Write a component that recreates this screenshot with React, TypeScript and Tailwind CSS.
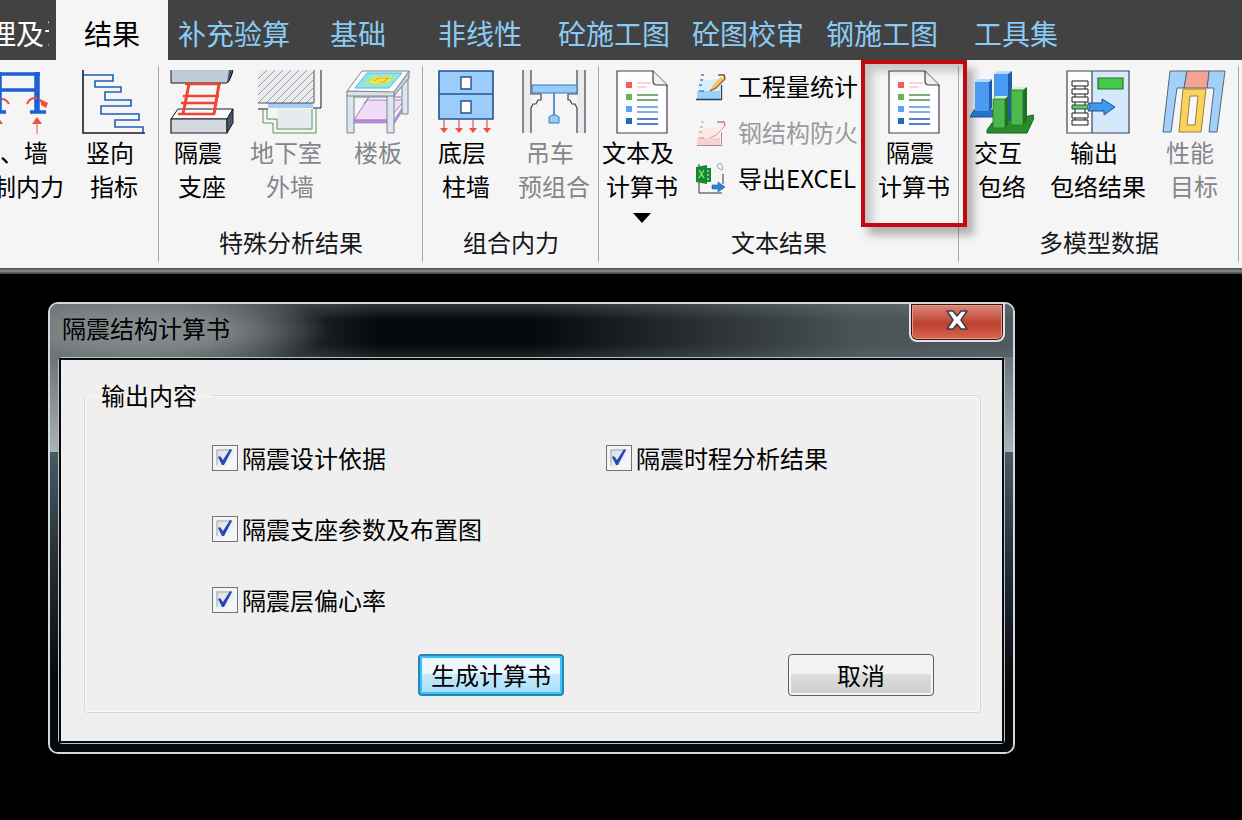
import React, { useState } from 'react';

type IconProps = { className?: string };

const DARK = '#1b1b22';
const BLUE = '#1f5fb8';

const FrameIcon: React.FC<IconProps> = ({ className }) => (
    <svg viewBox="0 0 64 64" className={className} fill="none" aria-hidden="true">
        <path d="M10 4H56M10 20H52" stroke="#1d5fd6" strokeWidth="3.5" />
        <path d="M15 2V42M53 2V42" stroke="#1d5fd6" strokeWidth="5.5" />
        <path d="M8 42H22M46 42H62" stroke="#1d5fd6" strokeWidth="3.5" />
        <path d="M43 34Q46 27 53 28M56 30L62 34M18 29Q22 29 25 34" stroke="#f0503c" strokeWidth="2" />
        <path d="M56 29L64 33L62 38L57 35Z" fill="#f0503c" />
        <path d="M53 53V64M15 53V64" stroke="#f58a78" strokeWidth="1.5" />
        <path d="M53 47L58 54H48ZM14 47L19 54H9Z" fill="#f0503c" />
    </svg>
);

const StoreyCurveIcon: React.FC<IconProps> = ({ className }) => (
    <svg viewBox="0 0 64 64" className={className} fill="none" aria-hidden="true">
        <path d="M1 5H31V11H13V17H39V22H23V30H49V36H19V44H57V50H33V57H61V63" stroke={BLUE} strokeWidth="1.6" />
        <path d="M1 0V63H63" stroke={DARK} strokeWidth="1.6" />
    </svg>
);

const BearingIcon: React.FC<IconProps> = ({ className }) => (
    <svg viewBox="0 0 64 64" className={className} fill="none" aria-hidden="true">
        <path d="M1 0H60L57 13H1Z" fill="#c0cbd9" />
        <path d="M57 13L59 0H63V3L59 12Z" fill="#46586c" />
        <path d="M1 0V13H57L60 9L63 0" stroke={DARK} />
        <path d="M8 39H63L57 49H1Z" fill="#fafafa" stroke={DARK} />
        <path d="M1 49H57V63H1Z" fill="#d3d9df" stroke={DARK} strokeWidth="1.2" />
        <path d="M57 49L63 39V53L57 63Z" fill="#46586c" stroke={DARK} />
        <path d="M15 14H51M13 26H49M11 33H47M8 44H45" stroke="#f04530" strokeWidth="2.6" />
        <path d="M19 14L13 44M49 14L44 44" stroke="#f04530" strokeWidth="3" />
    </svg>
);

const BasementIcon: React.FC<IconProps> = ({ className }) => (
    <svg viewBox="0 0 64 64" className={className} fill="none" aria-hidden="true">
        <defs>
            <clipPath id="soil"><path d="M0 0H55V33H0Z" /></clipPath>
        </defs>
        <path d="M0 0H56V33H0Z" fill="#e9ebee" />
        <g clipPath="url(#soil)" stroke="#9c9ca4">
            <path d="M-24 33L9 0M-16 33L17 0M-8 33L25 0M0 33L33 0M8 33L41 0M16 33L49 0M24 33L57 0M32 33L65 0M40 33L73 0M48 33L81 0" />
        </g>
        <path d="M10 33H55V38H10Z" fill="#a4cdf6" />
        <path d="M20 39H53V58H20Z" fill="#e6ebee" />
        <path d="M0 33H56V0" stroke="#584c50" />
        <path d="M63 0V38H55M0 39H10" stroke={DARK} />
        <path d="M5 39V53H15V63H58V39M9 39V49H19V59H54V39" stroke="#55925a" />
    </svg>
);

const SlabIcon: React.FC<IconProps> = ({ className }) => (
    <svg viewBox="0 0 64 64" className={className} fill="none" aria-hidden="true">
        <path d="M8 50L21 30H59L42 50Z" fill="#f0dcf6" stroke="#a57fc4" />
        <path d="M8 50H42V53H8ZM48 50L60 32V36L48 54Z" fill="#bd8fdc" stroke="#9a74bd" strokeWidth=".6" />
        <path d="M8 27L23 27L18 34M23 27H55" stroke="#777783" />
        <path d="M56 12L62 5V44H56Z" fill="#dfe5ee" stroke="#7b8494" />
        <path d="M1 25H8V63H1ZM41 25H48V63H41Z" fill="#dfe5ee" stroke="#7b8494" />
        <path d="M48 22L63 1V8L48 26Z" fill="#c5ced9" stroke="#7b8494" />
        <path d="M1 21H48V26H1Z" fill="#dbe2ea" stroke="#7b8494" />
        <path d="M1 21L16 1H63L48 22Z" fill="#f9fafb" stroke="#7b8494" />
        <path d="M9 18L21 3H56L43 18Z" fill="#8ee5ee" stroke="#58b8d4" />
        <path d="M17 15L24 6H50L41 15Z" fill="#a5eb92" />
        <path d="M23 13L28 7L46 6L42 12L35 14Z" fill="#f0e848" />
        <path d="M28 11L32 8H42L38 12H34" stroke="#f0a040" strokeWidth="1.2" />
    </svg>
);

const BottomWallIcon: React.FC<IconProps> = ({ className }) => (
    <svg viewBox="0 0 64 64" className={className} fill="none" aria-hidden="true">
        <path d="M5 1H59V49H5Z" fill="#9ccdfa" stroke="#24508c" strokeWidth="1.6" />
        <path d="M5 24H59" stroke="#24508c" strokeWidth="1.6" />
        <path d="M27 7H37V19H27ZM27 31H37V43H27Z" fill="#fff" stroke="#24508c" strokeWidth="1.4" />
        <path d="M10 50V59M25 50V59M39 50V59M53 50V59" stroke="#e86a60" strokeWidth="1.4" />
        <path d="M6 58H14L10 63ZM21 58H29L25 63ZM35 58H43L39 63ZM49 58H57L53 63Z" fill="#ea5048" />
    </svg>
);

const CraneIcon: React.FC<IconProps> = ({ className }) => (
    <svg viewBox="0 0 64 64" className={className} fill="none" aria-hidden="true">
        <path d="M1 0H9V63H1ZM55 0H63V63H55Z" fill="#e8ecee" />
        <path d="M1 0V63M63 0V63M9 0V24H19V30H16L14 34H11L9 38V63M55 0V24H46V30H48L50 34H53L55 38V63" stroke="#42424a" strokeWidth="1.2" />
        <path d="M10 15H55V23H10Z" fill="#97cbfa" stroke="#3b78b8" />
        <path d="M32 23V45" stroke="#3b78b8" strokeWidth="1.6" />
        <path d="M30 45H34L37 47V53H27V47Z" fill="#97cbfa" stroke="#3b78b8" />
    </svg>
);

const ReportIcon: React.FC<IconProps> = ({ className }) => (
    <svg viewBox="0 0 64 64" className={className} fill="none" aria-hidden="true">
        <path d="M7 1H43L57 15V63H7Z" fill="#fdfdff" stroke="#4a3c44" strokeWidth="1.2" />
        <path d="M43 1V11Q43 15 47 15H57" fill="#eef2f6" stroke="#4a3c44" strokeWidth="1.2" />
        <path d="M16 12H22V18H16Z" fill="#f0604c" />
        <path d="M16 24H22V30H16Z" fill="#6cb058" />
        <path d="M16 36H22V42H16Z" fill="#5ea4ee" />
        <path d="M16 48H22V54H16Z" fill="#2468bc" />
        <path d="M27 13H41M27 17H37" stroke="#f6b0a6" />
        <path d="M27 25H48M27 30H48" stroke="#568f58" strokeWidth="1.3" />
        <path d="M27 37H48M27 42H48" stroke="#5a8edc" strokeWidth="1.3" />
        <path d="M27 49H48M27 54H48" stroke="#2a58a8" strokeWidth="1.6" />
    </svg>
);

const StatisticsIcon: React.FC<IconProps> = ({ className }) => (
    <svg viewBox="0 0 30 30" className={className} fill="none" aria-hidden="true">
        <path d="M2 12L9 9L24 8V28H2Z" fill="#d6eefc" />
        <path d="M1 20H24V28H1Z" fill="#9bd3f7" />
        <path d="M0 28.5H26M25.500 14V29" stroke="#23406c" strokeWidth="1.3" />
        <path d="M5 4H8M4 9H7M3 14H6M3 20H8" stroke="#4a80c4" strokeWidth="1.4" />
        <path d="M14 20L17 14L25 6L29 8L20 17Z" fill="#f6c068" />
        <path d="M14 20L20 17L29 8" stroke="#a8682a" strokeWidth="1.4" />
        <path d="M22 4L28 4L29 8" stroke="#8a4a20" strokeWidth="1.6" />
    </svg>
);

const FireproofIcon: React.FC<IconProps> = ({ className }) => (
    <svg viewBox="0 0 30 30" className={className} fill="none" aria-hidden="true">
        <path d="M2 13L9 11L24 10V28H2Z" fill="#fbe9e6" />
        <path d="M1 21H24V28H1Z" fill="#f8d4d0" />
        <path d="M1 28.500H26M25.500 15V29" stroke="#b58a8a" />
        <path d="M5 5H8M4 10H7M3 15H6M3 21H8" stroke="#a89aa0" />
        <path d="M14 21L17 15L25 7L29 9L20 18Z" fill="#fbeeea" />
        <path d="M14 21L20 18L29 9" stroke="#e0988e" />
        <path d="M21 5L28 5L29 9" stroke="#c87a74" strokeWidth="1.4" />
    </svg>
);

const ExcelIcon: React.FC<IconProps> = ({ className }) => (
    <svg viewBox="0 0 30 32" className={className} fill="none" aria-hidden="true">
        <path d="M3 2V31H26M27 12V22" stroke="#33333c" />
        <path d="M0 5L11 3V6H15V20H11V22L0 20Z" fill="#168a2e" />
        <path d="M3 8L8 16M8 8L3 16M11 9H13M11 13H13M11 17H13" stroke="#8fe08e" strokeWidth="1.4" />
        <path d="M16 23H22V20L29 25L22 30V27H16Z" fill="#2f80dc" stroke="#1d5ba8" strokeWidth=".6" />
        <path d="M21 3L24 1L27 5L26 8L22 6Z" stroke="#9aa0b0" />
    </svg>
);

const BarsIcon: React.FC<IconProps> = ({ className }) => (
    <svg viewBox="0 0 64 64" className={className} fill="none" aria-hidden="true">
        <path d="M0 47L4 40H24V47Z" fill="#2a70c8" stroke="#1b4f98" />
        <path d="M5 12H19V41H5Z" fill="#4a9af4" />
        <path d="M5 12L8 9H22L19 12Z" fill="#b4dafc" />
        <path d="M19 12L22 9V38L19 41Z" fill="#1f5cae" />
        <path d="M24 4H38V29H24Z" fill="#4a9af4" />
        <path d="M24 4L28 1H42L38 4Z" fill="#b4dafc" />
        <path d="M38 4L42 1V54H38Z" fill="#1f5cae" />
        <path d="M17 60L22 53L64 45V48L57 63H17Z" fill="#2a8c2e" stroke="#1d5f22" />
        <path d="M23 29H35V58H23Z" fill="#4fb84c" />
        <path d="M23 29L26 26H38L35 29Z" fill="#d4f2c4" />
        <path d="M35 29L38 26V55L35 58Z" fill="#1e7226" />
        <path d="M41 20H53V55H41Z" fill="#4fb84c" />
        <path d="M41 20L44 17H57L53 20Z" fill="#d4f2c4" />
        <path d="M53 20L57 17V51L53 55Z" fill="#1e7226" />
        <path d="M23 29H35V58H23ZM41 20H53V55H41Z" stroke="#23702a" strokeWidth=".8" />
    </svg>
);

const ExportIcon: React.FC<IconProps> = ({ className }) => (
    <svg viewBox="0 0 64 64" className={className} fill="none" aria-hidden="true">
        <path d="M1 1H26V63H1Z" fill="#fdfdfd" />
        <path d="M26 1H63V63H26Z" fill="#d6e9fb" />
        <path d="M1 1H63V63H1ZM26 1V63" stroke="#3c4658" strokeWidth="1.2" />
        <path d="M32 8H57V19H32Z" fill="#46c84e" stroke="#23702a" strokeWidth="1.2" />
        <path d="M6 11H22V16H6ZM6 19H22V24H6ZM6 27H22V32H6ZM6 43H22V48H6ZM6 50H22V55H6ZM9 16V19M19 16V19M9 24V27M19 24V27M9 32V35M19 32V35M9 39V43M19 39V43M9 48V50M19 48V50" stroke={DARK} />
        <path d="M6 35H22V39H6Z" fill="#6cc07c" stroke="#1d5f32" />
        <path d="M22 33H36V29L49 37L38 45V41H22L24 37Z" fill="#3f98ee" stroke="#1e4c88" />
    </svg>
);

const TargetIcon: React.FC<IconProps> = ({ className }) => (
    <svg viewBox="0 0 64 64" className={className} fill="none" stroke="#56667a" aria-hidden="true">
        <path d="M8 1H25L22 18H15L9 62H1Z" fill="#a3d0f8" />
        <path d="M47 1H63L55 62H47L52 18H45Z" fill="#a3d0f8" />
        <path d="M25 1H47L45 18H22Z" fill="#f5a394" />
        <path d="M21 19H44L39 62H17Z" fill="#f8d45c" stroke="#9c7c34" />
        <path d="M28 26H36L33 55H25Z" fill="#f8f8f6" stroke="#9c7c34" />
    </svg>
);

const tabs = [
    { name: '补充验算', className: 'pl-2.5 pr-5' },
    { name: '基础', className: 'pl-5 pr-6.5' },
    { name: '非线性', className: 'pl-6.5 pr-4.5' },
    { name: '砼施工图', className: 'pl-4.5 pr-3' },
    { name: '砼图校审', className: 'px-2.5' },
    { name: '钢施工图', className: 'pl-3 pr-4.5' },
    { name: '工具集', className: 'px-4.5' },
];

interface ToolButtonProps {
    icon: React.ReactNode;
    lines: string[];
    disabled?: boolean;
    dropdown?: boolean;
    flush?: boolean;
    highlighted?: boolean;
}

const ToolButton: React.FC<ToolButtonProps> = ({ icon, lines, disabled, dropdown, flush, highlighted }) => (
    <button
        type="button"
        disabled={disabled}
        className={`relative flex min-w-16 shrink-0 flex-col items-center self-start whitespace-nowrap text-2xl/[34px] ${disabled ? 'text-[#85858a]' : 'text-black'}`}
    >
        {icon}
        <span className={flush ? 'mt-px' : 'mt-px pr-2'}>{lines[0]}</span>
        {lines[1] && <span>{lines[1]}</span>}
        {dropdown && (
            <svg viewBox="0 0 18 10" className="mt-2.5 h-2.5 w-4.5" aria-hidden="true"><path d="M0 0H18L9 10Z" /></svg>
        )}
        {highlighted && (
            <span className="pointer-events-none absolute -inset-x-[17px] -top-2.5 h-[167px] border-4 border-[#c00a10] shadow-[7px_8px_8px_rgba(60,50,50,0.35),inset_7px_7px_8px_rgba(60,50,50,0.25)]" />
        )}
    </button>
);

const SmallButton: React.FC<{ icon: React.ReactNode; text: string; disabled?: boolean }> = ({ icon, text, disabled }) => (
    <button
        type="button"
        disabled={disabled}
        className={`flex items-center gap-3 whitespace-nowrap text-2xl/[46px] ${disabled ? 'text-[#9a9a9e]' : 'text-black'}`}
    >
        {icon}
        {text}
    </button>
);

const RibbonGroup: React.FC<{ label?: string; className: string; children: React.ReactNode }> = ({ label, className, children }) => (
    <section className="relative flex shrink-0 flex-col pt-2.5">
        <div className="absolute right-0 top-1.5 bottom-1.5 w-px bg-[#a9a9ad]" />
        <div className={`flex h-[155px] ${className}`}>{children}</div>
        <h2 className="text-center text-2xl/[34px] text-[#17171c]">{label}</h2>
    </section>
);

const CheckOption: React.FC<{ text: string }> = ({ text }) => {
    const [checked, setChecked] = useState(true);
    return (
        <label className="flex items-center gap-1 whitespace-nowrap text-2xl/[36px]">
            <span className="grid size-6.5 place-items-center">
                <input
                    type="checkbox"
                    checked={checked}
                    onChange={e => setChecked(e.target.checked)}
                    className="col-start-1 row-start-1 size-6.5 appearance-none border border-[#70757a] bg-linear-to-br from-[#d4dade] to-white ring-3 ring-inset ring-[#f4f4f4]"
                />
                {checked && (
                    <svg viewBox="0 0 26 26" className="pointer-events-none col-start-1 row-start-1 size-6.5" aria-hidden="true">
                        <path d="M5 20V5H20" stroke="#a4abb4" fill="none" />
                        <path d="M6 12L8 11L11 15L18 4L20 5L12 20H10Z" fill="#2549b4" />
                    </svg>
                )}
            </span>
            {text}
        </label>
    );
};

const Ribbon: React.FC = () => (
    <div className="flex h-[208px] bg-[#f5f5f6]">
        <section className="relative flex w-[159px] shrink-0 flex-col overflow-hidden pt-2.5">
            <div className="flex justify-end gap-4.5 pr-[13px]">
                <ToolButton icon={<FrameIcon className="size-16" />} lines={['柱、墙', '控制内力']} />
                <ToolButton icon={<StoreyCurveIcon className="size-16" />} lines={['竖向', '指标']} />
            </div>
            <div className="absolute right-0 top-1.5 bottom-1.5 w-px bg-[#a9a9ad]" />
        </section>
        <RibbonGroup label="特殊分析结果" className="gap-4 pl-[11px] pr-[13px]">
            <ToolButton icon={<BearingIcon className="size-16" />} lines={['隔震', '支座']} />
            <ToolButton icon={<BasementIcon className="size-16" />} lines={['地下室', '外墙']} disabled />
            <ToolButton icon={<SlabIcon className="size-16" />} lines={['楼板']} disabled flush />
        </RibbonGroup>
        <RibbonGroup label="组合内力" className="gap-5 pl-[11px] pr-[9px]">
            <ToolButton icon={<BottomWallIcon className="size-16" />} lines={['底层', '柱墙']} />
            <ToolButton icon={<CraneIcon className="size-16" />} lines={['吊车', '预组合']} disabled />
        </RibbonGroup>
        <RibbonGroup label="文本结果" className="pl-[3px] pr-[9px]">
            <ToolButton icon={<ReportIcon className="size-16" />} lines={['文本及', '计算书']} dropdown />
            <div className="ml-3.5 mr-5 -mt-[7px] flex flex-col items-start">
                <SmallButton icon={<StatisticsIcon className="size-7.5" />} text="工程量统计" />
                <SmallButton icon={<FireproofIcon className="size-7.5" />} text="钢结构防火" disabled />
                <SmallButton icon={<ExcelIcon className="h-8 w-7.5" />} text="导出EXCEL" />
            </div>
            <ToolButton icon={<ReportIcon className="size-16" />} lines={['隔震', '计算书']} highlighted />
        </RibbonGroup>
        <RibbonGroup label="多模型数据" className="gap-4 pl-[11px] pr-[13px]">
            <ToolButton icon={<BarsIcon className="size-16" />} lines={['交互', '包络']} />
            <ToolButton icon={<ExportIcon className="size-16" />} lines={['输出', '包络结果']} />
            <ToolButton icon={<TargetIcon className="size-16" />} lines={['性能', '目标']} disabled />
        </RibbonGroup>
    </div>
);

const ReportDialog: React.FC = () => (
    <div
        role="dialog"
        aria-labelledby="dialog-title"
        className="w-full max-w-[967px] rounded-[10px] border-2 border-[#d3d8da] bg-linear-to-b from-[#4b5458] from-0% via-[#a9b4b9] via-33% to-[#050a10] to-80%"
    >
        <div className="rounded-lg bg-[linear-gradient(to_bottom,transparent_33%,#4c5a64_33%,#28323a_55%,#05080d_85%)] px-2 pb-2">
            <header className="-mx-2 flex h-[53px] items-start justify-between rounded-t-lg bg-[radial-gradient(ellipse_190px_44px_at_90px_26px,#8b9092,#7c8284_45%,transparent),linear-gradient(to_bottom,rgba(120,130,134,0.35),transparent_30%,transparent_75%,rgba(120,130,134,0.2)),linear-gradient(to_right,#596164,#4a5154_14%,#05090c_34%,#05090c_50%,#4b5356_84%,#505a5e)] pl-3 pr-2">
                <h1 id="dialog-title" className="text-2xl/[48px] text-black">隔震结构计算书</h1>
                <button
                    type="button"
                    aria-label="关闭"
                    className="flex h-9.5 w-24 items-center justify-center rounded-b-lg border-2 border-t-0 border-[#dfe2e3] bg-linear-to-b from-[#dc8a7c] from-0% via-[#bd3f30] via-55% to-[#dc6a50] to-100% shadow-[inset_0_0_0_1px_#3c1410,inset_0_0_0_2px_#e89a8a]"
                >
                    <svg viewBox="0 0 24 22" className="mb-1 h-5.5 w-6" aria-hidden="true">
                        <path d="M2 2H8L12 7L16 2H22L16 11L22 20H16L12 15L8 20H2L8 11Z" fill="#fff" stroke="#3c3c4c" strokeWidth="1.5" strokeLinejoin="round" />
                    </svg>
                </button>
            </header>
            <div className="rounded-sm border border-[#b9c0c4]">
                <div className="border-2 border-[#080c10] bg-[#efefef] pt-[17px] pr-[21px] pb-7 pl-[23px]">
                    <fieldset className="rounded border border-[#d6d6d6] pb-4 shadow-[inset_0_0_0_1px_#f8f8f8]">
                        <legend className="pl-4 pr-3.5 text-2xl/[36px]">输出内容</legend>
                        <div className="grid grid-cols-[394px_1fr] gap-y-[35px] pt-[27px] pl-[127px]">
                            <CheckOption text="隔震设计依据" />
                            <CheckOption text="隔震时程分析结果" />
                            <div className="col-span-2"><CheckOption text="隔震支座参数及布置图" /></div>
                            <div className="col-span-2"><CheckOption text="隔震层偏心率" /></div>
                        </div>
                        <div className="mt-9 flex justify-between pl-[333px] pr-[46px]">
                            <button
                                type="button"
                                className="h-10.5 w-[146px] rounded border-2 border-[#2b83b8] bg-linear-to-b from-[#ecf8fe] from-45% via-[#c5e9fb] via-50% to-[#a4e0fa] text-2xl/[36px] shadow-[inset_0_0_0_2px_#35c4f4]"
                            >
                                生成计算书
                            </button>
                            <button
                                type="button"
                                className="h-10.5 w-[146px] rounded border border-[#5c5c5e] bg-linear-to-b from-[#f2f2f2] from-45% via-[#dcdcdc] via-50% to-[#cfcfcf] text-2xl/[36px] shadow-[inset_0_0_0_2px_#f6f6f6]"
                            >
                                取消
                            </button>
                        </div>
                    </fieldset>
                </div>
            </div>
        </div>
    </div>
);

const App: React.FC = () => (
    <div className="min-h-screen overflow-hidden bg-black font-['Noto_Sans_CJK_SC','Noto_Sans',sans-serif] text-black">
        <nav className="flex h-15 bg-[#424242] text-[28px]/[66px] whitespace-nowrap text-[#8acbf5]">
            <button type="button" className="flex w-14 shrink-0 pr-[7px] text-white">
                <span className="flex-1 overflow-hidden"><span className="-ml-3">理及计</span></span>
            </button>
            <button type="button" className="w-28 shrink-0 bg-[#f5f5f6] text-black">结果</button>
            {tabs.map(tab => (
                <button key={tab.name} type="button" className={`shrink-0 ${tab.className}`}>{tab.name}</button>
            ))}
        </nav>
        <Ribbon />
        <div className="h-1.5 bg-linear-to-b from-[#4a4a4a] via-[#8e8e8e] to-[#3c3c3c]" />
        <main className="pt-7 pr-4 pb-10 pl-12">
            <ReportDialog />
        </main>
    </div>
);

export default App;
